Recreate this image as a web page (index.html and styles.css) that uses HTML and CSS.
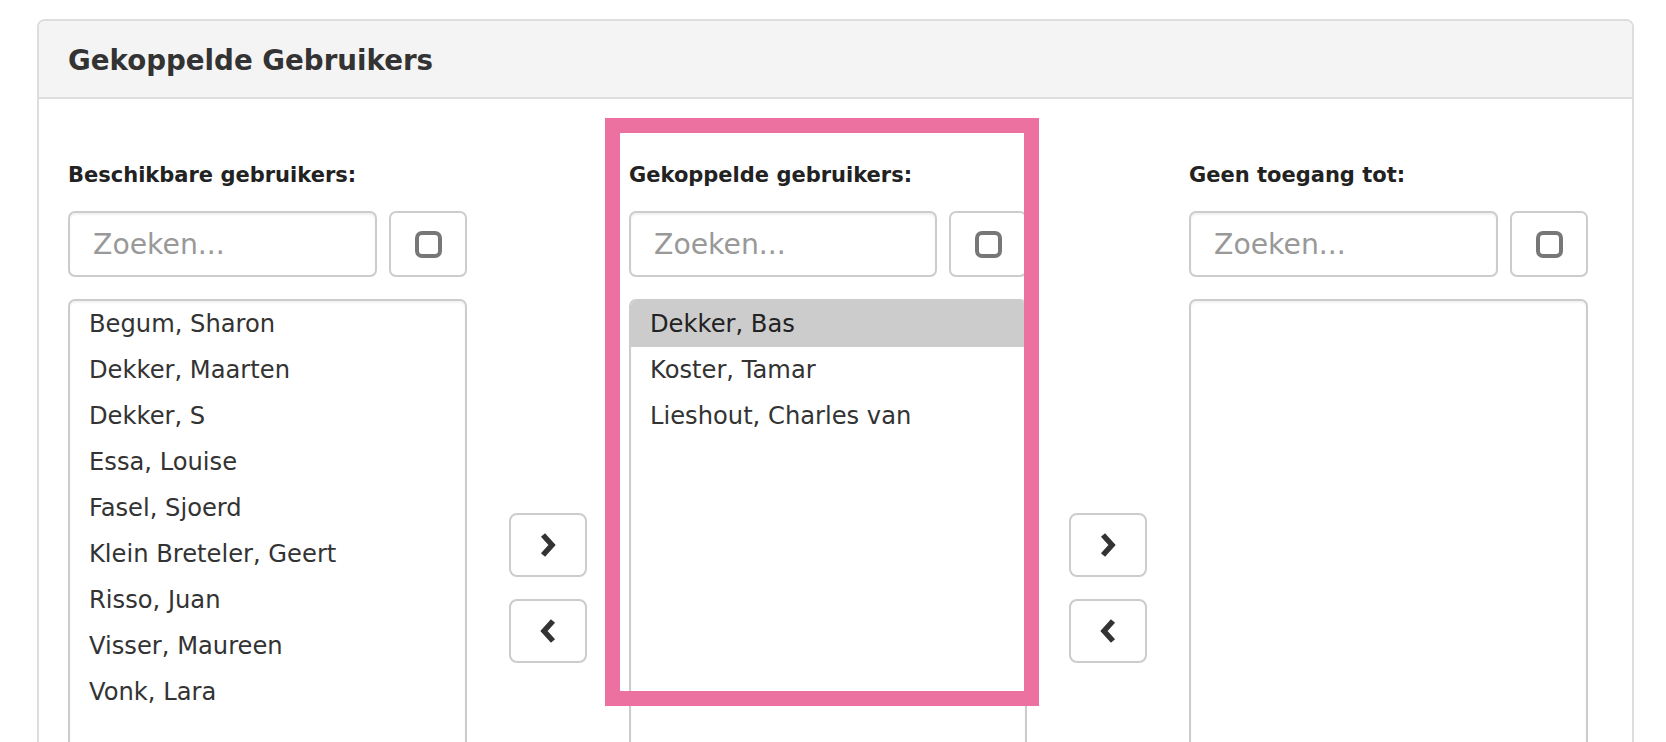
FILE: index.html
```html
<!DOCTYPE html>
<html lang="nl">
<head>
<meta charset="utf-8">
<title>Gekoppelde Gebruikers</title>
<link rel="stylesheet" href="styles.css">
</head>
<body>
<section class="panel">
  <header class="panel-header">
    <h2 class="panel-title">Gekoppelde Gebruikers</h2>
  </header>
  <div class="panel-body">
    <div class="column">
      <label class="col-label">Beschikbare gebruikers:</label>
      <div class="search-row">
        <input class="search" type="text" placeholder="Zoeken...">
        <button class="check-btn" type="button" aria-label="Alles selecteren">
          <svg class="check-icon" viewBox="0 0 27 27" width="27" height="27"><rect x="2" y="2" width="23" height="23" rx="5" ry="5"/></svg>
        </button>
      </div>
      <ul class="user-list">
        <li>Begum, Sharon</li>
        <li>Dekker, Maarten</li>
        <li>Dekker, S</li>
        <li>Essa, Louise</li>
        <li>Fasel, Sjoerd</li>
        <li>Klein Breteler, Geert</li>
        <li>Risso, Juan</li>
        <li>Visser, Maureen</li>
        <li>Vonk, Lara</li>
      </ul>
    </div>

    <div class="arrows">
      <button class="arrow-btn" type="button" aria-label="Toevoegen">
        <svg class="chevron" viewBox="0 0 20 28" width="20" height="28"><polyline points="5,4 14,14 5,24"/></svg>
      </button>
      <button class="arrow-btn" type="button" aria-label="Verwijderen">
        <svg class="chevron" viewBox="0 0 20 28" width="20" height="28"><polyline points="15,4 6,14 15,24"/></svg>
      </button>
    </div>

    <div class="column column-highlight">
      <div class="highlight"></div>
      <label class="col-label">Gekoppelde gebruikers:</label>
      <div class="search-row">
        <input class="search" type="text" placeholder="Zoeken...">
        <button class="check-btn" type="button" aria-label="Alles selecteren">
          <svg class="check-icon" viewBox="0 0 27 27" width="27" height="27"><rect x="2" y="2" width="23" height="23" rx="5" ry="5"/></svg>
        </button>
      </div>
      <ul class="user-list">
        <li class="selected">Dekker, Bas</li>
        <li>Koster, Tamar</li>
        <li>Lieshout, Charles van</li>
      </ul>
    </div>

    <div class="arrows">
      <button class="arrow-btn" type="button" aria-label="Toevoegen">
        <svg class="chevron" viewBox="0 0 20 28" width="20" height="28"><polyline points="5,4 14,14 5,24"/></svg>
      </button>
      <button class="arrow-btn" type="button" aria-label="Verwijderen">
        <svg class="chevron" viewBox="0 0 20 28" width="20" height="28"><polyline points="15,4 6,14 15,24"/></svg>
      </button>
    </div>

    <div class="column">
      <label class="col-label">Geen toegang tot:</label>
      <div class="search-row">
        <input class="search" type="text" placeholder="Zoeken...">
        <button class="check-btn" type="button" aria-label="Alles selecteren">
          <svg class="check-icon" viewBox="0 0 27 27" width="27" height="27"><rect x="2" y="2" width="23" height="23" rx="5" ry="5"/></svg>
        </button>
      </div>
      <ul class="user-list"></ul>
    </div>
  </div>
</section>
</body>
</html>
```
FILE: styles.css
```css
html, body {
  margin: 0;
  padding: 0;
  overflow: hidden;
  background: #ffffff;
}

body {
  font-family: "DejaVu Sans", Verdana, sans-serif;
  color: #333333;
}

.panel {
  margin: 19px 0 0 37px;
  width: 1597px;
  box-sizing: border-box;
  border: 2px solid #dddddd;
  border-radius: 8px;
  background: #ffffff;
}

.panel-header {
  background: #f4f4f4;
  border-bottom: 2px solid #dddddd;
  border-radius: 6px 6px 0 0;
  padding: 23px 29px 19px;
}

.panel-title {
  margin: 0;
  font-size: 27.7px;
  line-height: 34px;
  font-weight: bold;
  color: #333333;
}

.panel-body {
  display: flex;
  align-items: flex-start;
  gap: 42px;
  padding: 64px 29px 0;
}

.column {
  width: 399px;
  flex: none;
  display: flex;
  flex-direction: column;
}

.column-highlight {
  position: relative;
  width: 398px;
}

.highlight {
  position: absolute;
  left: -24px;
  top: -45px;
  width: 434px;
  height: 588px;
  box-sizing: border-box;
  border: 15px solid #ed71a0;
  pointer-events: none;
  z-index: 2;
}

.col-label {
  display: block;
  font-size: 21px;
  line-height: 25px;
  font-weight: bold;
  color: #222222;
  margin-bottom: 23px;
}

.search-row {
  display: flex;
  gap: 12px;
  height: 66px;
}

.search {
  flex: 1 1 auto;
  min-width: 0;
  height: 66px;
  box-sizing: border-box;
  border: 2px solid #cccccc;
  border-radius: 7px;
  padding: 0 23px;
  font-family: "DejaVu Sans", Verdana, sans-serif;
  font-size: 28.3px;
  color: #333333;
  background: #ffffff;
  box-shadow: inset 0 2px 2px rgba(0, 0, 0, 0.06);
  outline: none;
}

.search::placeholder {
  color: #999999;
}

.check-btn {
  width: 78px;
  height: 66px;
  flex: none;
  box-sizing: border-box;
  border: 2px solid #cccccc;
  border-radius: 7px;
  background: #ffffff;
  padding: 0;
  display: flex;
  align-items: center;
  justify-content: center;
}

.check-icon rect {
  fill: none;
  stroke: #777777;
  stroke-width: 4;
}

.user-list {
  list-style: none;
  margin: 22px 0 0;
  padding: 0;
  height: 600px;
  box-sizing: border-box;
  border: 2px solid #cccccc;
  border-radius: 7px;
  overflow: hidden;
  box-shadow: inset 0 2px 2px rgba(0, 0, 0, 0.05);
}

.user-list li {
  height: 46px;
  line-height: 46px;
  padding-left: 19px;
  font-size: 24.2px;
  color: #333333;
  white-space: nowrap;
}

.user-list li.selected {
  background: #cccccc;
  color: #222222;
}

.arrows {
  width: 78px;
  flex: none;
  display: flex;
  flex-direction: column;
  gap: 22px;
  padding-top: 350px;
}

.arrow-btn {
  width: 78px;
  height: 64px;
  box-sizing: border-box;
  border: 2px solid #cccccc;
  border-radius: 8px;
  background: #ffffff;
  padding: 0;
  display: flex;
  align-items: center;
  justify-content: center;
}

.chevron polyline {
  fill: none;
  stroke: #333333;
  stroke-width: 5.5;
  stroke-linecap: butt;
  stroke-linejoin: miter;
}
```
